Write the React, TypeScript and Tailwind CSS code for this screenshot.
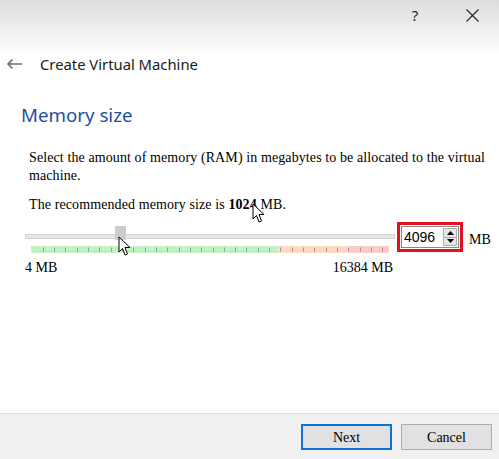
import React from 'react';

const ticks = Array.from({ length: 31 }, (_, i) => 11.7 + i * 11.32);

function Cursor({ className }: { className: string }) {
  return (
    <svg className={className} width="13" height="21" viewBox="0 0 13 21">
      <path
        d="M1 1 L1 16 L4.5 12.5 L7 19 L9.5 18 L7 11.5 L12 11.5 Z"
        fill="white"
        stroke="black"
        strokeWidth="1"
        strokeLinejoin="miter"
      />
    </svg>
  );
}

export default function App() {
  const serif = { fontFamily: '"Liberation Serif", "Noto Sans CJK TC", serif' };

  return (
    <div className="relative flex h-[459px] w-[499px] flex-col overflow-hidden bg-white text-black">
      {/* Title bar */}
      <div className="h-[90px] bg-[linear-gradient(to_bottom,#dcdcdc,#ffffff_55px)]">
        <div className="flex h-[30px] justify-end gap-[11px] pr-[4px]">
          <div className="flex w-[46px] items-center justify-center font-['Noto_Sans',sans-serif] text-[15px] text-[#222]">
            ?
          </div>
          <div className="flex w-[46px] items-center justify-center">
            <svg width="13" height="13" viewBox="0 0 13 13">
              <path d="M0.5 0.5 L12.5 12.5 M12.5 0.5 L0.5 12.5" stroke="#222" strokeWidth="1.1" />
            </svg>
          </div>
        </div>
        <div className="mt-[23px] flex items-center">
          <svg className="ml-[6px]" width="16" height="12" viewBox="0 0 16 12">
            <path d="M16 6 H2 M6.5 1.5 L2 6 L6.5 10.5" stroke="#6d6d6d" strokeWidth="1.6" fill="none" />
          </svg>
          <span className="ml-[18px] font-['Noto_Sans',sans-serif] text-[14.8px] text-[#1a1a1a]">
            Create Virtual Machine
          </span>
        </div>
      </div>

      {/* Content */}
      <div className="flex-1">
        <h1 className="ml-[21px] mt-[11px] font-['Noto_Sans',sans-serif] text-[18.7px] leading-[28px] text-[#1e4fa3]">
          Memory size
        </h1>
        <div className="mt-[20px] pl-[29px] pr-[10px] text-[14px] leading-[18px] tracking-[0.1px]" style={serif}>
          <p>Select the amount of memory (RAM) in megabytes to be allocated to the virtual machine.</p>
          <p className="mt-[11px]">
            The recommended memory size is <b>1024</b> MB.
          </p>
        </div>

        <div className="mt-[8px] flex items-start pl-[25px]">
          <div className="w-[370px]">
            <div className="relative mt-[2px] h-[16px]">
              <div className="absolute left-0 right-0 top-[10px] h-[5px] border border-[#d4d4d4] bg-[#e7e7e7]" />
              <div className="absolute left-[90px] top-[2px] h-[14px] w-[11px] bg-[#cccccc]" />
            </div>
            <svg className="ml-[6px] mt-[6px] block" width="358" height="7" viewBox="0 0 358 7">
              <rect x="0" y="0" width="247.5" height="7" fill="#c4f1c4" />
              <rect x="247.5" y="0" width="70" height="7" fill="#fdd9c3" />
              <rect x="317.5" y="0" width="40.5" height="7" fill="#fdcbcb" />
              {ticks.map((x) => (
                <rect key={x} x={Math.round(x)} y="1.5" width="1" height="4" fill="#9a9a9a" />
              ))}
            </svg>
            <div className="mr-[2px] mt-[6px] flex justify-between text-[14px] leading-[18px]" style={serif}>
              <span>4 MB</span>
              <span>16384 MB</span>
            </div>
          </div>
          <div className="ml-[2px] h-[30px] w-[66px] border-[3px] border-[#e3101f] p-px">
            <div className="flex h-full items-center border border-[#8a8a8a] bg-white">
              <span className="ml-[2px] flex-1 font-['Liberation_Sans',sans-serif] text-[14px]">4096</span>
              <div className="mr-px flex h-[18px] w-[14px] flex-col">
                <div className="flex flex-1 items-center justify-center border border-[#adadad] bg-[#e5e5e5]">
                  <svg width="7" height="4" viewBox="0 0 7 4"><path d="M3.5 0 L7 4 L0 4 Z" fill="#000" /></svg>
                </div>
                <div className="flex flex-1 items-center justify-center border border-t-0 border-[#adadad] bg-[#e5e5e5]">
                  <svg width="7" height="4" viewBox="0 0 7 4"><path d="M0 0 L7 0 L3.5 4 Z" fill="#000" /></svg>
                </div>
              </div>
            </div>
          </div>
          <span className="ml-[6px] mt-[9px] text-[14px] leading-[18px]" style={serif}>MB</span>
        </div>
      </div>

      {/* Footer */}
      <div className="flex h-[46px] items-start justify-end gap-[9px] border-t border-[#dcdcdc] bg-[#f0f0f0] pr-[7px] pt-[10px]">
        <button className="h-[26px] w-[91px] border-2 border-[#0a74d6] bg-[#e1e1e1] text-[14px]" style={serif}>
          Next
        </button>
        <button className="h-[26px] w-[91px] border border-[#adadad] bg-[#e1e1e1] text-[14px]" style={serif}>
          Cancel
        </button>
      </div>

      <Cursor className="absolute left-[252px] top-[203px]" />
      <Cursor className="absolute left-[118px] top-[236px]" />
    </div>
  );
}
